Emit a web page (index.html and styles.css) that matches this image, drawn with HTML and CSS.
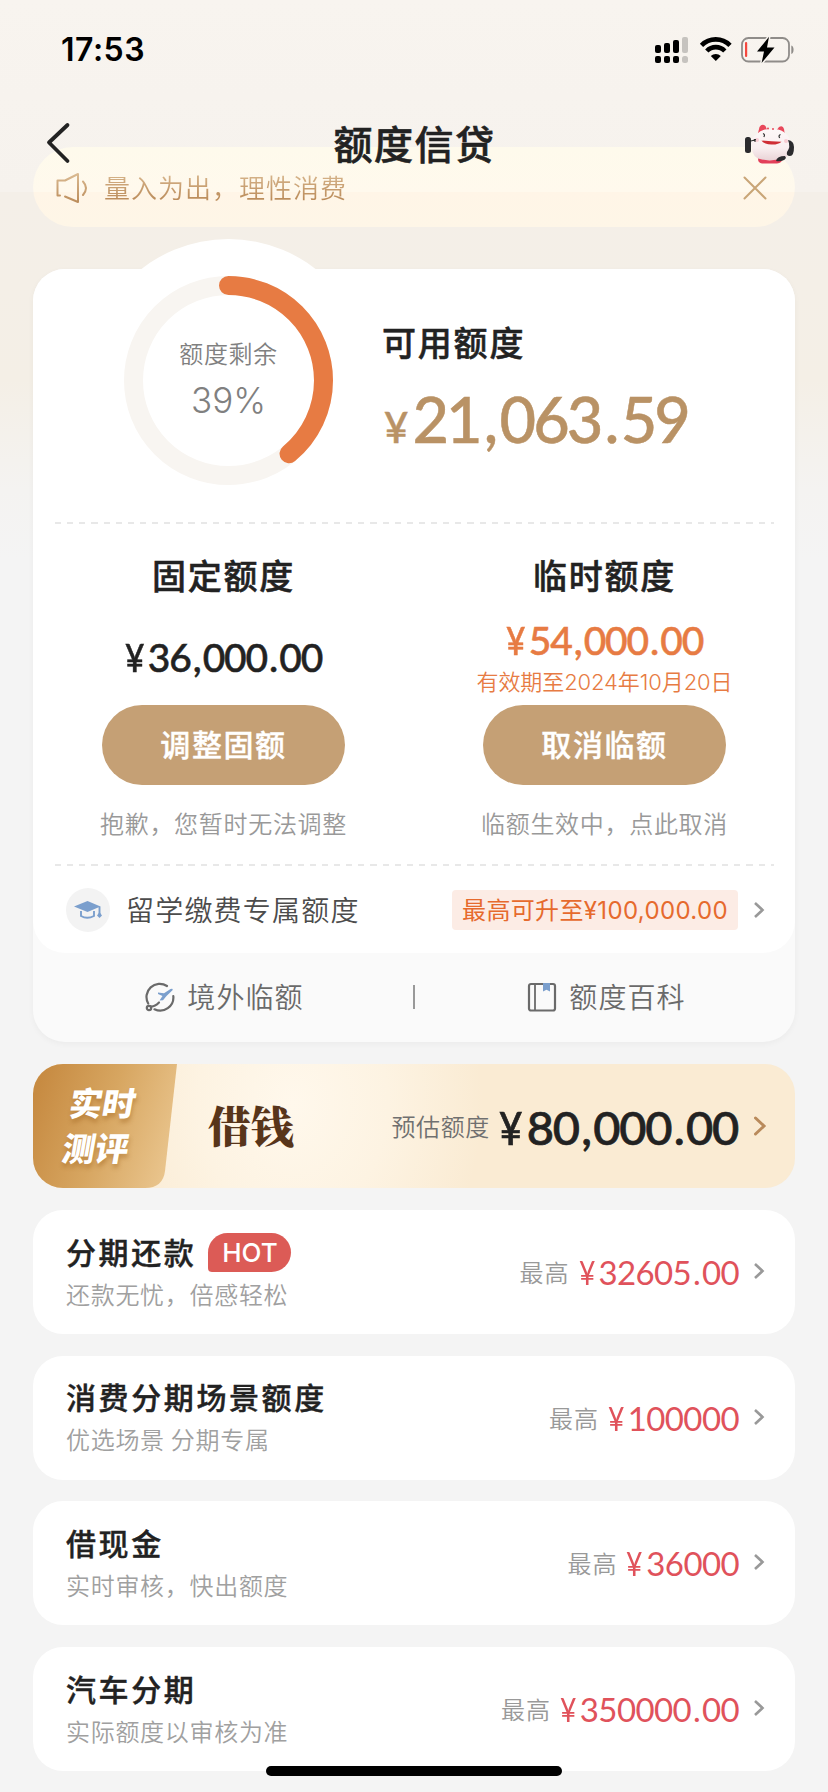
FILE: index.html
```html
<!DOCTYPE html>
<html lang="zh-CN">
<head>
<meta charset="utf-8">
<title>额度信贷</title>
<link rel="stylesheet" href="styles.css">
</head>
<body>
<div class="page">
  <header class="header">
    <div class="status">
      <span class="time">17:53</span>
      <svg class="status-icons" width="140" height="28" viewBox="0 0 140 28">
        <g>
          <rect x="0" y="9" width="6" height="8" rx="2"/><rect x="9" y="7" width="6" height="10" rx="2"/><rect x="18" y="4" width="6" height="13" rx="2"/>
          <rect x="0" y="20" width="6" height="7" rx="2"/><rect x="9" y="20" width="6" height="7" rx="2"/><rect x="18" y="20" width="6" height="7" rx="2"/>
          <g fill="#c6c3bf"><rect x="27" y="1" width="6" height="16" rx="2"/><rect x="27" y="20" width="6" height="7" rx="2.5"/></g>
        </g>
        <g fill="none" stroke="#000" stroke-width="4.6">
          <path d="M46.500 9.300a20 20 0 0 1 28.500 0"/>
          <path d="M51.800 15a12.500 12.500 0 0 1 18 0"/>
        </g>
        <path d="M60.800 25l-5-5a7.500 7.500 0 0 1 10 0z"/>
        <rect x="87" y="2" width="47" height="23.500" rx="6.500" fill="none" stroke="#8f8c89" stroke-width="1.800"/>
        <path d="M136.300 9.500c3 1 3 7.500 0 8.500z" fill="#8f8c89"/>
        <rect x="90" y="6" width="2.200" height="15" rx="1" fill="#f5483f"/>
        <path d="M114 .8L102 15.500h7L106.600 27 119.500 11.500h-7.500z" stroke="#f7f3ee" stroke-width="3" paint-order="stroke" stroke-linejoin="round"/>
      </svg>
    </div>
    <nav class="nav">
      <svg class="back" width="26" height="42" viewBox="0 0 26 42"><path d="M22.500 3L4 20.500 22.500 39" fill="none" stroke="#222" stroke-width="3.800" stroke-linecap="round" stroke-linejoin="round"/></svg>
      <h1 class="title">额度信贷</h1>
      <svg class="mascot" width="50" height="42" viewBox="0 0 50 42">
        <defs><linearGradient id="cat" x1="0" y1="0" x2="0" y2="1"><stop offset="0" stop-color="#fdf8f8"/><stop offset=".6" stop-color="#f9eff0"/><stop offset="1" stop-color="#e9d3d6"/></linearGradient></defs>
        <path d="M13 10L14.500 4q2.500-4 6-1l2 5zM31 8l3-4q4-2 5 2l1 7z" fill="#e8485a"/>
        <path d="M7 23Q5 15 12 11 18 5 26 6.500 36 5 41 11q5 4 4 11 1 12-10 15.500H18Q6 35 7 23z" fill="url(#cat)"/>
        <path d="M13 35.500q12 4 25-.5-1 5-6 5.500H17q-4-.5-4-5z" fill="#e2405a"/>
        <path d="M16.500 17.500q9.500 1 20 1.200-3 3-10 2.800-8-.3-10-4z" fill="#cf2e35"/>
        <path d="M18 10.500q2.500 1 .8 3.500M35.500 11.500q-2.500 1-.8 3.500" fill="none" stroke="#333" stroke-width="1.200"/>
        <circle cx="23" cy="5.500" r="1" fill="#e8485a"/><circle cx="28" cy="6" r="1" fill="#e8485a"/>
        <circle cx="12" cy="17" r="2" fill="#f7cdd3"/><circle cx="41" cy="18" r="2" fill="#f7cdd3"/>
        <rect x="0" y="14" width="6" height="16" rx="2.500" fill="#2b2b2e"/>
        <path d="M6 18l5-1.500M10 16v3" stroke="#333" stroke-width="1.100"/>
        <path d="M43 17q6 1 6 7 0 9-4 9-4 0-3-4 4-5 1-12z" fill="#2b2b2e"/>
        <path d="M31 38q1-5 9-5l1 2q-3 4-10 3z" fill="#2b2b2e"/>
      </svg>
    </nav>
  </header>

  <div class="notice">
    <svg width="34" height="32" viewBox="0 0 34 32" fill="none" stroke="url(#gold)" stroke-width="2" stroke-linecap="round" stroke-linejoin="round">
      <defs><linearGradient id="gold" gradientUnits="userSpaceOnUse" x1="0" y1="0" x2="0" y2="32"><stop offset="0" stop-color="#dcbd95"/><stop offset="1" stop-color="#ba8a58"/></linearGradient></defs>
      <path d="M5 23.500H2.500V8.500H10L23 2V30L10 24.500"/><path d="M28 9.500q6 6.500 0 13.500"/>
    </svg>
    <span class="notice-text">量入为出，理性消费</span>
    <svg width="24" height="24" viewBox="0 0 24 24"><path d="M1.500 1.500l21 21M22.500 1.500l-21 21" stroke="#c9a577" stroke-width="2" stroke-linecap="round"/></svg>
  </div>

  <section class="quota">
    <div class="quota-main">
      <div class="overview">
        <div class="gauge">
          <svg class="ring" width="283" height="283" viewBox="0 0 283 283" fill="none">
            <circle cx="141.500" cy="141.500" r="141.500" fill="#fff"/>
            <circle cx="141.500" cy="141.500" r="95" stroke="#f8f5f1" stroke-width="19"/>
            <circle cx="141.500" cy="141.500" r="95" stroke="#e77b43" stroke-width="19" stroke-linecap="round" pathLength="100" stroke-dasharray="39 61" transform="rotate(-90 141.500 141.500)"/>
          </svg>
          <div class="gauge-label">
            <span class="gauge-name">额度剩余</span>
            <span class="gauge-value">39%</span>
          </div>
        </div>
        <div class="available">
          <h2 class="heading">可用额度</h2>
          <p class="available-amount"><span class="yen-small">¥</span>21<span class="p">,</span>063<span class="p">.</span>59</p>
        </div>
      </div>
      <div class="dash"></div>
      <div class="columns">
        <div class="column">
          <h2 class="heading">固定额度</h2>
          <div class="sum"><span class="amount"><span class="yen">¥</span>36<span class="p">,</span>000<span class="p">.</span>00</span></div>
          <button class="button">调整固额</button>
          <p class="hint">抱歉，您暂时无法调整</p>
        </div>
        <div class="column">
          <h2 class="heading">临时额度</h2>
          <div class="sum"><span class="amount amount-orange"><span class="yen">¥</span>54<span class="p">,</span>000<span class="p">.</span>00</span><span class="expiry">有效期至2024年10月20日</span></div>
          <button class="button">取消临额</button>
          <p class="hint">临额生效中，点此取消</p>
        </div>
      </div>
      <div class="dash"></div>
      <div class="study">
        <span class="study-icon">
          <svg width="30" height="20" viewBox="0 0 30 20"><path d="M1 6.500L14.500 1l13 5.500-13 5.500z" fill="#7b9fcd"/><path d="M8 11v5q6 3.500 13 0v-5M26.500 6.500V15" fill="none" stroke="#7b9fcd" stroke-width="1.900"/><path d="M26.500 12l2.500 3.500-2.500 2.500-2.500-2.500z" fill="#7b9fcd"/></svg>
        </span>
        <span class="study-name">留学缴费专属额度</span>
        <span class="tag">最高可升至¥100,000.00</span>
        <svg class="chevron" width="12" height="18" viewBox="0 0 12 18"><path d="M2 2l7.500 7L2 16" fill="none" stroke="#999" stroke-width="2.600"/></svg>
      </div>
    </div>
    <div class="links">
      <a class="link">
        <svg width="30" height="30" viewBox="0 0 30 30" fill="none" stroke="#6a6a6a" stroke-width="2.200" stroke-linecap="round">
          <path d="M22 4A13.200 13.200 0 0 0 3.200 21.500M28.300 14A13.200 13.200 0 0 1 9.500 27.300"/>
          <circle cx="4" cy="26" r="2.200"/><path d="M5.500 24.500q4 .5 8.500-4"/>
          <path d="M13 10.500l6 .8 6.500-4.300q3-.8 2 1.200L21.500 14 18 18.300l-3.500.2L17.500 14l-4.500-2z" fill="#7b9fcd" stroke="none"/>
        </svg>
        <span>境外临额</span>
      </a>
      <span class="divider"></span>
      <a class="link">
        <svg width="30" height="30" viewBox="0 0 30 30"><rect x="2" y="2" width="26" height="26.500" rx="2" fill="none" stroke="#6a6a6a" stroke-width="2.200"/><path d="M8 2v26" stroke="#6a6a6a" stroke-width="1.800"/><path d="M16 1h7v8.500l-3.500-1.700L16 9.500z" fill="#7b9fcd"/></svg>
        <span>额度百科</span>
      </a>
    </div>
  </section>

  <section class="banner">
    <svg class="banner-tab" width="146" height="124" viewBox="0 0 146 124">
      <defs><linearGradient id="tab" x1="0" y1=".3" x2="1" y2=".6"><stop offset="0" stop-color="#c78b42"/><stop offset=".5" stop-color="#d7a661"/><stop offset="1" stop-color="#e9c48c"/></linearGradient></defs>
      <path d="M0 0H144L132 107Q130 124 112 124H0z" fill="url(#tab)"/>
    </svg>
    <div class="banner-badge"><span>实时</span><span class="second">测评</span></div>
    <span class="banner-title">借钱</span>
    <span class="banner-label">预估额度</span>
    <span class="banner-amount"><span class="yen">¥</span>80<span class="p">,</span>000<span class="p">.</span>00</span>
    <svg class="chevron" width="14" height="20" viewBox="0 0 14 20"><path d="M2.500 2l8.500 8-8.500 8" fill="none" stroke="#b98a5b" stroke-width="3" stroke-linecap="round"/></svg>
  </section>

  <section class="products">
    <article class="product">
      <div class="info"><h3 class="name">分期还款<span class="hot">HOT</span></h3><p class="desc">还款无忧，倍感轻松</p></div>
      <span class="max">最高</span><span class="price"><span class="yen">¥</span>32605<span class="p">.</span>00</span>
      <svg class="chevron" width="12" height="18" viewBox="0 0 12 18"><path d="M2 2l7.500 7L2 16" fill="none" stroke="#999" stroke-width="2.600"/></svg>
    </article>
    <article class="product">
      <div class="info"><h3 class="name">消费分期场景额度</h3><p class="desc">优选场景 分期专属</p></div>
      <span class="max">最高</span><span class="price"><span class="yen">¥</span>100000</span>
      <svg class="chevron" width="12" height="18" viewBox="0 0 12 18"><path d="M2 2l7.500 7L2 16" fill="none" stroke="#999" stroke-width="2.600"/></svg>
    </article>
    <article class="product">
      <div class="info"><h3 class="name">借现金</h3><p class="desc">实时审核，快出额度</p></div>
      <span class="max">最高</span><span class="price"><span class="yen">¥</span>36000</span>
      <svg class="chevron" width="12" height="18" viewBox="0 0 12 18"><path d="M2 2l7.500 7L2 16" fill="none" stroke="#999" stroke-width="2.600"/></svg>
    </article>
    <article class="product">
      <div class="info"><h3 class="name">汽车分期</h3><p class="desc">实际额度以审核为准</p></div>
      <span class="max">最高</span><span class="price"><span class="yen">¥</span>350000<span class="p">.</span>00</span>
      <svg class="chevron" width="12" height="18" viewBox="0 0 12 18"><path d="M2 2l7.500 7L2 16" fill="none" stroke="#999" stroke-width="2.600"/></svg>
    </article>
  </section>
  <div class="home-indicator"></div>
</div>
</body>
</html>
```
FILE: styles.css
```css
* { box-sizing: border-box; }
body { margin: 0; background: #f4f4f4; }
h1, h2, h3, p { margin: 0; font-weight: 500; }
svg { display: block; flex: none; }

.page {
  position: relative;
  width: 828px;
  height: 1792px;
  padding: 0 33px;
  overflow: hidden;
  color: #222;
  font-family: "Noto Sans CJK SC", sans-serif;
  white-space: nowrap;
  background: linear-gradient(#f8f4ef 0, #f6f2ed 192px, #f4efe8 192px, #f4efe6 380px, #f4f3f1 490px, #f4f4f4 560px, #f4f4f4 100%);
}

/* header */
.header { position: relative; z-index: 2; height: 147px; }
.status { display: flex; justify-content: space-between; align-items: center; height: 100px; padding-left: 28px; }
.time { font: 600 32px/38px "Inter", sans-serif; color: #000; letter-spacing: .5px; }
.nav { display: flex; align-items: center; justify-content: space-between; height: 86px; padding: 0 0 0 12px; }
.title { margin: -3px 0 0 13px; font-size: 39px; line-height: 56px; letter-spacing: 1.500px; -webkit-text-stroke: .6px #222; }
.mascot { margin-top: 2px; }

.notice {
  display: flex;
  align-items: center;
  height: 80px;
  padding: 2px 28px 0 22px;
  border-radius: 40px;
  background: linear-gradient(#fefaec 0, #fff9ed 45px, #fff5e7 45px, #fef6e7 100%);
}
.notice-text {
  flex: 1;
  margin: -3px 0 0 15px;
  font-size: 26px;
  font-weight: 350;
  line-height: 36px;
  letter-spacing: 1px;
  color: transparent;
  background: linear-gradient(#dcbd95, #b58350);
  -webkit-background-clip: text;
  background-clip: text;
}

/* money glyphs */
.yen { display: inline-block; margin-right: .04em; transform: scaleX(.86); transform-origin: left; }
.p { margin: 0 .055em; }

/* quota card */
.quota {
  margin-top: 42px;
  height: 773px;
  border-radius: 32px;
  background: #fafafa;
  box-shadow: 0 2px 6px rgba(0, 0, 0, .04);
}
.quota-main { height: 684px; border-radius: 32px; background: #fff; }
.overview { display: flex; height: 253px; }
.gauge { position: relative; width: 349px; }
.ring { position: absolute; left: 54px; top: -30px; }
.gauge-label {
  position: relative;
  display: flex;
  flex-direction: column;
  align-items: center;
  width: 283px;
  margin-left: 54px;
  padding-top: 66px;
  color: #808080;
}
.gauge-name { font-size: 24px; font-weight: 350; line-height: 36px; letter-spacing: .6px; }
.gauge-value { margin-top: 9px; font: 350 35px/40px "Inter", sans-serif; }
.available { padding-top: 48px; }
.heading { font-size: 34px; line-height: 50px; letter-spacing: 1.800px; -webkit-text-stroke: .5px #222; }
.available-amount { margin-top: 13px; margin-left: 2px; font: 500 63px/77px "Lato", sans-serif; letter-spacing: -2.900px; color: #b99265; -webkit-text-stroke: .5px #b99265; }
.available-amount .p { margin: 0 .066em; }
.yen-small { display: inline-block; margin-right: 4px; font-size: 42px; letter-spacing: 0; }
.dash {
  height: 2px;
  margin: 0 21px 0 22px;
  background: repeating-linear-gradient(90deg, #e8e8e8 0 6.200px, transparent 6.200px 12.130px);
}
.columns { display: flex; height: 340px; }
.column { display: flex; flex-direction: column; align-items: center; width: 381px; padding-top: 26px; }
.sum { display: flex; flex-direction: column; align-items: center; justify-content: center; gap: 4px; height: 105px; padding-top: 8px; }
.amount { font: 500 39px/46px "Lato", sans-serif; letter-spacing: -1.200px; -webkit-text-stroke: .5px currentColor; }
.amount-orange { color: #e77b43; }
.expiry { font-family: "Inter", "Noto Sans CJK SC", sans-serif; font-size: 22px; font-weight: 350; line-height: 30px; color: #e77b43; letter-spacing: -.1px; }
.button {
  width: 243px;
  height: 80px;
  padding: 0 0 5px;
  border: 0;
  border-radius: 40px;
  background: #c5a075;
  color: #fff;
  font: 500 30px/44px "Noto Sans CJK SC", sans-serif;
  letter-spacing: 1.600px;
  -webkit-text-stroke: .4px #fff;
}
.hint { margin-top: 20px; font-size: 24px; font-weight: 350; line-height: 36px; letter-spacing: .7px; color: #999; }

.study { display: flex; align-items: center; height: 87px; padding: 1px 30px 0 33px; }
.study-icon { display: flex; align-items: center; justify-content: center; width: 44px; height: 44px; border-radius: 50%; background: #f3f3f3; }
.study-name { flex: 1; margin: -2px 0 0 16px; font-size: 28px; font-weight: 350; line-height: 40px; letter-spacing: 1.200px; color: #4c4c4c; }
.tag {
  width: 286px;
  height: 40px;
  padding-top: 2px;
  border-radius: 4px;
  background: #fcece5;
  color: #e66a2d;
  font: 400 24px/38px "Inter", "Noto Sans CJK SC", sans-serif;
  letter-spacing: .35px;
  text-align: center;
}
.chevron { margin-left: 15px; }
.links { display: flex; align-items: center; height: 88px; }
.link { display: flex; align-items: center; justify-content: center; gap: 12px; flex: 1; padding-left: 3px; font-size: 28px; font-weight: 350; line-height: 40px; letter-spacing: 1.100px; color: #6a6a6a; }
.link span { margin-top: -2px; }
.divider { width: 2px; height: 24px; background: #999; }

/* banner */
.banner {
  position: relative;
  display: flex;
  align-items: center;
  height: 124px;
  margin-top: 22px;
  padding-right: 28px;
  border-radius: 30px;
  overflow: hidden;
  background: radial-gradient(ellipse 190px 230px at 260px 40px, #fff8ec 0, #fdf3e2 50%, transparent 100%), #faebd3;
}
.banner-tab { position: absolute; left: 0; top: 0; }
.banner-badge {
  position: relative;
  width: 175px;
  margin-top: -3px;
  padding-left: 33px;
  color: #fff;
  font-size: 33px;
  font-weight: 900;
  line-height: 45px;
  text-shadow: 1px 4px 4px rgba(160, 100, 30, .45);
}
.banner-badge span { display: block; transform: skewX(-10deg); transform-origin: left; margin-left: 4px; }
.banner-badge .second { margin-left: -3px; }
.banner-title { flex: 1; margin-top: -2px; font-family: "Noto Serif CJK SC", "Noto Sans CJK SC", serif; font-size: 43px; font-weight: 900; line-height: 60px; color: #58351a; }
.banner-label { font-size: 24px; font-weight: 350; line-height: 36px; letter-spacing: .6px; color: #707070; }
.banner-amount { margin: 2px 0 0 9px; font: 500 47px/56px "Lato", sans-serif; letter-spacing: -1.300px; -webkit-text-stroke: .7px #222; }
.banner .chevron { margin-left: 15px; margin-top: -1px; }

/* products */
.products { display: flex; flex-direction: column; gap: 21.700px; margin-top: 22px; }
.product { display: flex; align-items: center; height: 124px; padding: 0 30px 0 33px; border-radius: 30px; background: #fff; }
.info { flex: 1; margin-top: -2px; }
.name { display: flex; align-items: center; height: 41px; margin-bottom: 4px; font-size: 30px; line-height: 41px; letter-spacing: 2.600px; -webkit-text-stroke: .4px #222; }
.hot {
  width: 83px;
  height: 39px;
  margin: 3px 0 0 12px;
  border-radius: 20px 20px 20px 4px;
  background: #dc5b56;
  color: #fff;
  font: 500 26px/39px "Inter", sans-serif;
  letter-spacing: 0;
  text-align: center;
  -webkit-text-stroke: 0;
}
.desc { font-size: 24px; font-weight: 350; line-height: 36px; letter-spacing: .7px; color: #a0a0a0; }
.max { font-size: 24px; font-weight: 350; line-height: 36px; letter-spacing: 1px; color: #999; }
.price { margin: 0 -1px 0 9px; font: 400 33px/40px "Lato", sans-serif; letter-spacing: -.6px; color: #e0525b; }
.product .chevron { margin-top: -2px; }

.home-indicator { position: absolute; left: 266px; top: 1766px; width: 296px; height: 10px; border-radius: 5px; background: #000; }
```
